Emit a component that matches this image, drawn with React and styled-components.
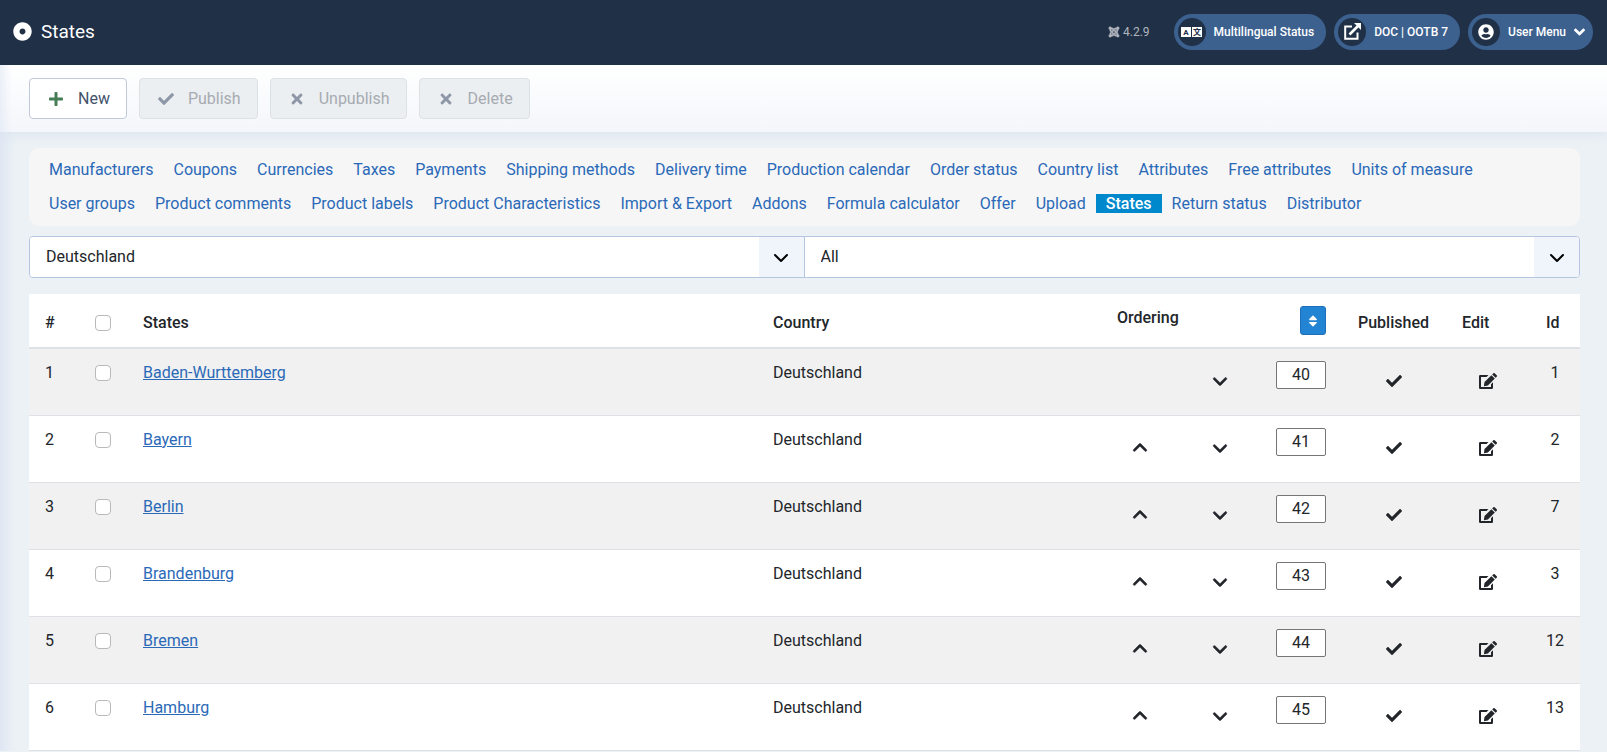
import React from "react";
import styled, { createGlobalStyle } from "styled-components";
import {
  FaAngleDown as FaAngleDownBold,
  FaCheck,
  FaDotCircle,
  FaJoomla,
  FaPlus,
  FaSort,
  FaTimes,
  FaUserCircle,
} from "react-icons/fa";
import { FaAngleDown, FaAngleUp } from "react-icons/fa6";

const GlobalStyle = createGlobalStyle`
  *, *::before, *::after { box-sizing: border-box; }
  body {
    margin: 0;
    background: #ecf1f5;
    color: #22262a;
    font: 400 16px/24px Roboto, "Liberation Sans", sans-serif;
  }
  button, input, select { font: inherit; color: inherit; }
`;

const Header = styled.header`
  position: relative;
  z-index: 2;
  display: flex;
  align-items: center;
  justify-content: space-between;
  height: 65px;
  padding: 0 14px 2px 13px;
  background: #203047;
  color: #fff;
`;

const PageTitle = styled.h1`
  display: flex;
  align-items: center;
  gap: 9px;
  margin: 0;
  font-size: 19px;
  font-weight: 400;
`;

const HeaderItems = styled.div`
  display: flex;
  align-items: center;
  gap: 8px;
  font-size: 12px;
`;

const Version = styled.span`
  display: flex;
  align-items: center;
  gap: 3px;
  margin-right: 16px;
  color: #b1b6be;

  svg {
    stroke: currentColor;
    stroke-width: 20px;
  }
`;

const Pill = styled.button`
  display: flex;
  align-items: center;
  gap: 8px;
  height: 36px;
  padding: 0 ${(p) => (p.$menu ? 8 : 12)}px 0 4px;
  border: 0;
  border-radius: 18px;
  background: #3c618f;
  color: #fff;
  font-weight: 500;
`;

const PillIcon = styled.span`
  display: grid;
  place-items: center;
  width: 28px;
  height: 28px;
  border-radius: 50%;
  background: #203047;
`;

const MenuArrow = styled(FaAngleDownBold)`
  width: 11px;
  height: 18px;
`;

const Toolbar = styled.div`
  position: relative;
  z-index: 1;
  display: flex;
  gap: 12px;
  padding: 13px 29px;
  background:
    linear-gradient(to right, rgba(223, 231, 243, 0.6), rgba(223, 231, 243, 0) 12px),
    linear-gradient(#fff, #f4f6fb);
  box-shadow: 0 0 14px #d5e0ec;
`;

const ToolButton = styled.button`
  display: flex;
  align-items: center;
  gap: 12px;
  height: 41px;
  padding: 0 16px;
  border: 1px solid #bfc9d9;
  border-radius: 4px;
  background: #fff;
  color: #42526b;

  svg {
    width: 20px;
    color: #457d54;
  }

  &:disabled {
    border-color: #dce1e6;
    background: #eceff2;
    color: #a6abb1;
  }

  &:disabled svg {
    color: #8e97a7;
  }
`;

const Content = styled.main`
  padding: 16px 27px 0 29px;
  background: linear-gradient(to right, #dfe7f3, #ecf1f5 15px);
`;

const SubNav = styled.nav`
  display: flex;
  flex-wrap: wrap;
  padding: 4px 10px 6px;
  margin-bottom: 10px;
  border-radius: 10px;
  background: #f6f6f6;
`;

const NavItem = styled.span`
  display: flex;
  align-items: center;
  height: 34px;
`;

const NavLink = styled.a`
  padding: 0 10px;
  line-height: 19px;
  text-decoration: none;
  color: ${(p) => (p.$active ? "#fff" : "#2a69b8")};
  background: ${(p) => (p.$active ? "#0088cc" : "transparent")};
  font-weight: ${(p) => (p.$active ? 500 : 400)};
`;

const Filters = styled.form`
  display: grid;
  grid-template-columns: 1fr 1fr;
  margin-bottom: 16px;
  border: 1px solid #b4c6e0;
  border-radius: 4px;
  overflow: hidden;
`;

const SelectBox = styled.div`
  display: grid;
  grid-template-columns: 1fr 45px;
  background: #fff;

  &:first-child {
    border-right: 1px solid #b4c6e0;
  }

  svg {
    grid-area: 1 / 2;
    place-self: center;
    margin-top: 2px;
    pointer-events: none;
    z-index: 1;
  }
`;

const Select = styled.select`
  grid-area: 1 / 1 / 2 / 3;
  height: 40px;
  padding: 0 60px 0 16px;
  border: 0;
  appearance: none;
  background: linear-gradient(#f0f4fb, #f0f4fb) right / 45px 100% no-repeat #fff;
`;

const Table = styled.table`
  width: 100%;
  table-layout: fixed;
  border-spacing: 0;
  background: #fff;
`;

const Column = styled.col`
  width: ${(p) => (p.$width ? `${p.$width}px` : "auto")};
`;

const HeadCell = styled.th`
  padding: 12px 0 12px 16px;
  border-bottom: 2px solid #dee2e6;
  text-align: left;
  vertical-align: bottom;
  font-weight: 500;
`;

const Row = styled.tr`
  background: #fff;

  &:nth-child(odd) {
    background: #f1f1f1;
  }
`;

const Cell = styled.td`
  height: 67px;
  padding: 12px 16px 0;
  border-bottom: 1px solid #dee2e6;
  vertical-align: top;
  text-align: ${(p) => (p.$center ? "center" : "left")};
`;

const Checkbox = styled.input`
  display: block;
  appearance: none;
  width: 16px;
  height: 16px;
  margin: 4px 0;
  border: 1px solid #b9b9b9;
  border-radius: 4px;
  background: #fff;
`;

const StateLink = styled.a`
  color: #2a69b8;
`;

const OrderHead = styled.div`
  display: flex;
  align-items: flex-start;
  justify-content: space-between;
  padding-right: 16px;
`;

const SortButton = styled.button`
  display: grid;
  place-items: center;
  width: 26px;
  height: 29px;
  padding: 0;
  border: 1px solid #1c6fb8;
  border-radius: 3px;
  background: #2384d3;
  color: #fff;
`;

const OrderControls = styled.div`
  display: grid;
  grid-template-columns: 46px 34px 46px 33px 50px;
`;

const IconButton = styled.button`
  display: grid;
  place-items: center;
  grid-column: ${(p) => p.$column || "auto"};
  width: 100%;
  height: 40px;
  padding: 0;
  border: 0;
  background: none;
  color: inherit;
`;

const OrderInput = styled.input`
  grid-column: 5;
  width: 50px;
  height: 28px;
  padding: 0 0 1px;
  border: 1px solid #767676;
  border-radius: 2px;
  background: #fff;
  text-align: center;
`;

const navLinks = [
  "Manufacturers", "Coupons", "Currencies", "Taxes", "Payments",
  "Shipping methods", "Delivery time", "Production calendar", "Order status",
  "Country list", "Attributes", "Free attributes", "Units of measure",
  "User groups", "Product comments", "Product labels",
  "Product Characteristics", "Import & Export", "Addons",
  "Formula calculator", "Offer", "Upload", "States", "Return status",
  "Distributor",
];

const states = [
  { name: "Baden-Wurttemberg", order: 40, id: 1 },
  { name: "Bayern", order: 41, id: 2 },
  { name: "Berlin", order: 42, id: 7 },
  { name: "Brandenburg", order: 43, id: 3 },
  { name: "Bremen", order: 44, id: 12 },
  { name: "Hamburg", order: 45, id: 13 },
];

const SelectArrow = () => (
  <svg width="16" height="16" viewBox="0 0 16 16" fill="none" stroke="#000" strokeWidth="2" strokeLinecap="round" strokeLinejoin="round">
    <path d="M2 5l6 6 6-6" />
  </svg>
);

const LanguageIcon = () => (
  <svg width="21" height="10" viewBox="0 0 21 10" aria-hidden="true">
    <rect width="10" height="10" fill="#fff" />
    <rect x="11" width="10" height="10" fill="#fff" />
    <g fill="#203047" fontSize="8" fontWeight="700" textAnchor="middle">
      <text x="5" y="8" fontFamily="Roboto, sans-serif">A</text>
      <text x="16" y="8" fontFamily='"Noto Sans CJK SC", sans-serif'>文</text>
    </g>
  </svg>
);

const ExternalIcon = () => (
  <svg width="17" height="17" viewBox="0 0 17 17" fill="none" stroke="currentColor">
    <path d="M8 3.5H1.2v12.3h12.3V9.5" strokeWidth="2" />
    <path d="M5.5 11.5L14 3" strokeWidth="2.6" />
    <path d="M10 0h7v7z" fill="currentColor" stroke="none" />
  </svg>
);

const EditIcon = () => (
  <svg width="18" height="16" viewBox="0 0 18 16" fill="currentColor">
    <path d="M9.5 2H1.2Q0 2 0 3.2v11.6Q0 16 1.2 16h11.6q1.2 0 1.2-1.2V9.2l-2 2V14H2V4h5.5z" />
    <path d="M12.4 2.2l3.4 3.4-6.9 6.9-4 .7.6-4.1z" />
    <path d="M13.2 1.4L14.3.3q.7-.6 1.4 0l2 2q.6.7 0 1.4l-1.1 1.1z" />
  </svg>
);

function StateRow({ state, index }) {
  return (
    <Row>
      <Cell>{index + 1}</Cell>
      <Cell>
        <Checkbox type="checkbox" aria-label={`Select ${state.name}`} />
      </Cell>
      <Cell>
        <StateLink href="#">{state.name}</StateLink>
      </Cell>
      <Cell>Deutschland</Cell>
      <Cell>
        <OrderControls>
          {index > 0 && (
            <IconButton type="button" $column={1} aria-label="Move up">
              <FaAngleUp size={18} stroke="currentColor" strokeWidth={16} />
            </IconButton>
          )}
          <IconButton type="button" $column={3} aria-label="Move down">
            <FaAngleDown size={18} stroke="currentColor" strokeWidth={16} />
          </IconButton>
          <OrderInput type="text" defaultValue={state.order} aria-label={`Order of ${state.name}`} />
        </OrderControls>
      </Cell>
      <Cell $center>
        <IconButton type="button" aria-label="Published">
          <FaCheck size={16} />
        </IconButton>
      </Cell>
      <Cell $center>
        <IconButton as="a" href="#" aria-label={`Edit ${state.name}`}>
          <EditIcon />
        </IconButton>
      </Cell>
      <Cell $center>{state.id}</Cell>
    </Row>
  );
}

export default function App() {
  return (
    <>
      <GlobalStyle />
      <Header>
        <PageTitle>
          <FaDotCircle size={19} />
          States
        </PageTitle>
        <HeaderItems>
          <Version>
            <FaJoomla size={12} />
            4.2.9
          </Version>
          <Pill type="button">
            <PillIcon><LanguageIcon /></PillIcon>
            Multilingual Status
          </Pill>
          <Pill type="button">
            <PillIcon><ExternalIcon /></PillIcon>
            DOC | OOTB 7
          </Pill>
          <Pill type="button" $menu>
            <PillIcon><FaUserCircle size={16} /></PillIcon>
            User Menu
            <MenuArrow />
          </Pill>
        </HeaderItems>
      </Header>
      <Toolbar>
        <ToolButton type="button"><FaPlus size={16} />New</ToolButton>
        <ToolButton type="button" disabled><FaCheck size={16} />Publish</ToolButton>
        <ToolButton type="button" disabled><FaTimes size={16} />Unpublish</ToolButton>
        <ToolButton type="button" disabled><FaTimes size={16} />Delete</ToolButton>
      </Toolbar>
      <Content>
        <SubNav>
          {navLinks.map((label) => (
            <NavItem key={label}>
              <NavLink href="#" $active={label === "States"}>{label}</NavLink>
            </NavItem>
          ))}
        </SubNav>
        <Filters>
          <SelectBox>
            <Select aria-label="Country"><option>Deutschland</option></Select>
            <SelectArrow />
          </SelectBox>
          <SelectBox>
            <Select aria-label="Published"><option>All</option></Select>
            <SelectArrow />
          </SelectBox>
        </Filters>
        <Table>
          <colgroup>
            <Column $width={50} />
            <Column $width={48} />
            <Column />
            <Column $width={344} />
            <Column $width={241} />
            <Column $width={104} />
            <Column $width={84} />
            <Column $width={50} />
          </colgroup>
          <thead>
            <tr>
              <HeadCell scope="col">#</HeadCell>
              <HeadCell scope="col"><Checkbox type="checkbox" aria-label="Select all" /></HeadCell>
              <HeadCell scope="col">States</HeadCell>
              <HeadCell scope="col">Country</HeadCell>
              <HeadCell scope="col">
                <OrderHead>
                  Ordering
                  <SortButton type="button" aria-label="Save ordering"><FaSort size={14} /></SortButton>
                </OrderHead>
              </HeadCell>
              <HeadCell scope="col">Published</HeadCell>
              <HeadCell scope="col">Edit</HeadCell>
              <HeadCell scope="col">Id</HeadCell>
            </tr>
          </thead>
          <tbody>
            {states.map((state, index) => (
              <StateRow key={state.name} state={state} index={index} />
            ))}
          </tbody>
        </Table>
      </Content>
    </>
  );
}
